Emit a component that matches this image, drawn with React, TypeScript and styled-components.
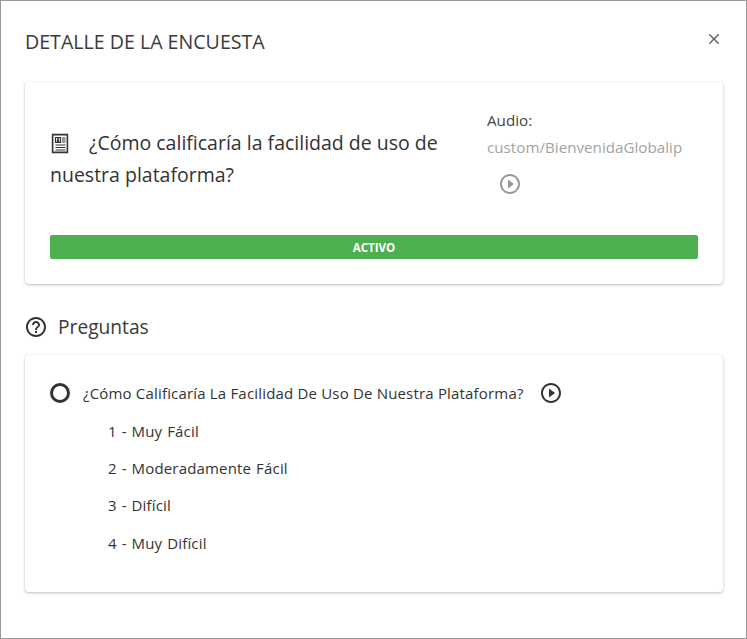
import React from 'react';
import styled, { createGlobalStyle } from 'styled-components';

const GlobalStyle = createGlobalStyle`
  html, body { margin: 0; padding: 0; height: 100%; background: #fff; }
  body { font-family: "Open Sans", "Noto Sans", sans-serif; color: #333; }
`;

const Dialog = styled.div`
  box-sizing: border-box;
  width: 747px;
  height: 639px;
  border: 1px solid #999;
  background: #fff;
  display: flex;
  flex-direction: column;
`;

const Header = styled.header`
  display: flex;
  justify-content: space-between;
  align-items: flex-start;
  padding: 28px 23px 0 24px;
  height: 81px;
  box-sizing: border-box;
`;

const Title = styled.h2`
  margin: 0;
  font-size: 19.6px;
  line-height: 26px;
  font-weight: 400;
  color: #3a3a3a;
`;

const Close = styled.button`
  border: 0;
  background: none;
  padding: 0;
  margin: 1px 0 0;
  width: 18px;
  height: 18px;
  color: #666;
  display: flex;
  align-items: center;
  justify-content: center;
`;

const Content = styled.main`
  padding: 0 23px 0 24px;
  display: flex;
  flex-direction: column;
`;

const Card = styled.section`
  background: #fff;
  border-radius: 4px;
  box-shadow: 0 1px 3px rgba(0, 0, 0, 0.25), 0 0 2px rgba(0, 0, 0, 0.06);
`;

const SurveyCard = styled(Card)`
  height: 202px;
  box-sizing: border-box;
  padding: 20px 25px 25px;
  display: flex;
  flex-direction: column;
`;

const SurveyTop = styled.div`
  display: flex;
  flex: 1;
`;

const SurveyName = styled.div`
  width: 437px;
  padding-top: 25px;
  font-size: 19.5px;
  line-height: 32px;
  color: #333;
`;

const NameIcon = styled.svg`
  width: 20px;
  height: 22px;
  vertical-align: -4px;
  margin-right: 19px;
`;

const AudioBox = styled.div`
  padding-top: 5px;
  font-size: 15.2px;
  line-height: 26px;
`;

const AudioLabel = styled.div`
  color: #444;
`;

const AudioPath = styled.div`
  color: #a3a3a3;
  margin-top: 1px;
`;

const AudioPlay = styled.div`
  margin: 12px 0 0 11px;
  color: #999;
  display: flex;
`;

const StatusBar = styled.div`
  height: 24px;
  border-radius: 2px;
  background: #4caf50;
  color: #fff;
  font-size: 11.6px;
  font-weight: 700;
  display: flex;
  align-items: center;
  justify-content: center;
`;

const SectionHead = styled.div`
  height: 71px;
  box-sizing: border-box;
  padding-top: 14px;
  margin-left: -1px;
  display: flex;
  align-items: center;
  gap: 10px;
  font-size: 19.2px;
  color: #3a3a3a;
`;

const QuestionCard = styled(Card)`
  height: 237px;
  box-sizing: border-box;
  padding: 26px 25px 0;
`;

const QuestionRow = styled.div`
  display: flex;
  align-items: center;
  height: 24px;
  font-size: 15px;
  letter-spacing: 0.18px;
  color: #333;
`;

const Radio = styled.span`
  box-sizing: border-box;
  width: 20px;
  height: 20px;
  border: 3px solid #333;
  border-radius: 50%;
  margin-right: 13px;
`;

const QuestionPlay = styled.span`
  display: flex;
  margin-left: 15px;
  color: #333;
`;

const Options = styled.ol`
  list-style: none;
  margin: 7px 0 0;
  padding: 0 0 0 58px;
`;

const Option = styled.li`
  height: 37.4px;
  display: flex;
  align-items: center;
  font-size: 15px;
  letter-spacing: 0.18px;
  word-spacing: 0.8px;
  color: #333;
`;

const PlayIcon = ({ size }: { size: number }) => (
  <svg width={size} height={size} viewBox="0 0 24 24" fill="currentColor">
    <path d="M10 16.5l6-4.5-6-4.5v9zM12 2C6.48 2 2 6.48 2 12s4.48 10 10 10 10-4.48 10-10S17.52 2 12 2zm0 18c-4.41 0-8-3.59-8-8s3.59-8 8-8 8 3.59 8 8-3.59 8-8 8z" />
  </svg>
);

const options = ['1 - Muy Fácil', '2 - Moderadamente Fácil', '3 - Difícil', '4 - Muy Difícil'];

export default function App() {
  return (
    <>
      <GlobalStyle />
      <Dialog>
        <Header>
          <Title>DETALLE DE LA ENCUESTA</Title>
          <Close aria-label="Cerrar">
            <svg width="18" height="18" viewBox="0 0 24 24" fill="currentColor">
              <path d="M19 6.41 17.59 5 12 10.59 6.41 5 5 6.41 10.59 12 5 17.59 6.41 19 12 13.41 17.59 19 19 17.59 13.41 12z" />
            </svg>
          </Close>
        </Header>
        <Content>
          <SurveyCard>
            <SurveyTop>
              <SurveyName>
                <NameIcon viewBox="0 0 20 22" fill="none" stroke="#333" strokeWidth="1.2">
                  <path d="M2.6 2.6h14.8v17.8H2.6z" strokeWidth="1.6" />
                  <path d="M5.5 5.5h5v5h-5z" />
                  <path d="M6.5 10.5c0-2 .6-2.4 1.5-2.4s1.5.4 1.5 2.4z" fill="#333" stroke="none" />
                  <circle cx="8" cy="7" r="1.1" fill="#333" stroke="none" />
                  <path d="M12 6h3.5M12 8h3.5M12 10h3.5M5.5 13h10M5.5 15.5h10M5.5 18h10" />
                </NameIcon>
                ¿Cómo calificaría la facilidad de uso de nuestra plataforma?
              </SurveyName>
              <AudioBox>
                <AudioLabel>Audio:</AudioLabel>
                <AudioPath>custom/BienvenidaGlobalip</AudioPath>
                <AudioPlay>
                  <PlayIcon size={24} />
                </AudioPlay>
              </AudioBox>
            </SurveyTop>
            <StatusBar>ACTIVO</StatusBar>
          </SurveyCard>
          <SectionHead>
            <svg width="24" height="24" viewBox="0 0 24 24" fill="#333">
              <path d="M11 18h2v-2h-2v2zm1-16C6.48 2 2 6.48 2 12s4.48 10 10 10 10-4.48 10-10S17.52 2 12 2zm0 18c-4.41 0-8-3.59-8-8s3.59-8 8-8 8 3.59 8 8-3.59 8-8 8zm0-14c-2.21 0-4 1.79-4 4h2c0-1.1.9-2 2-2s2 .9 2 2c0 2-3 1.75-3 5h2c0-2.25 3-2.5 3-5 0-2.21-1.79-4-4-4z" />
            </svg>
            Preguntas
          </SectionHead>
          <QuestionCard>
            <QuestionRow>
              <Radio />
              ¿Cómo Calificaría La Facilidad De Uso De Nuestra Plataforma?
              <QuestionPlay>
                <PlayIcon size={24} />
              </QuestionPlay>
            </QuestionRow>
            <Options>
              {options.map(o => (
                <Option key={o}>{o}</Option>
              ))}
            </Options>
          </QuestionCard>
        </Content>
      </Dialog>
    </>
  );
}
